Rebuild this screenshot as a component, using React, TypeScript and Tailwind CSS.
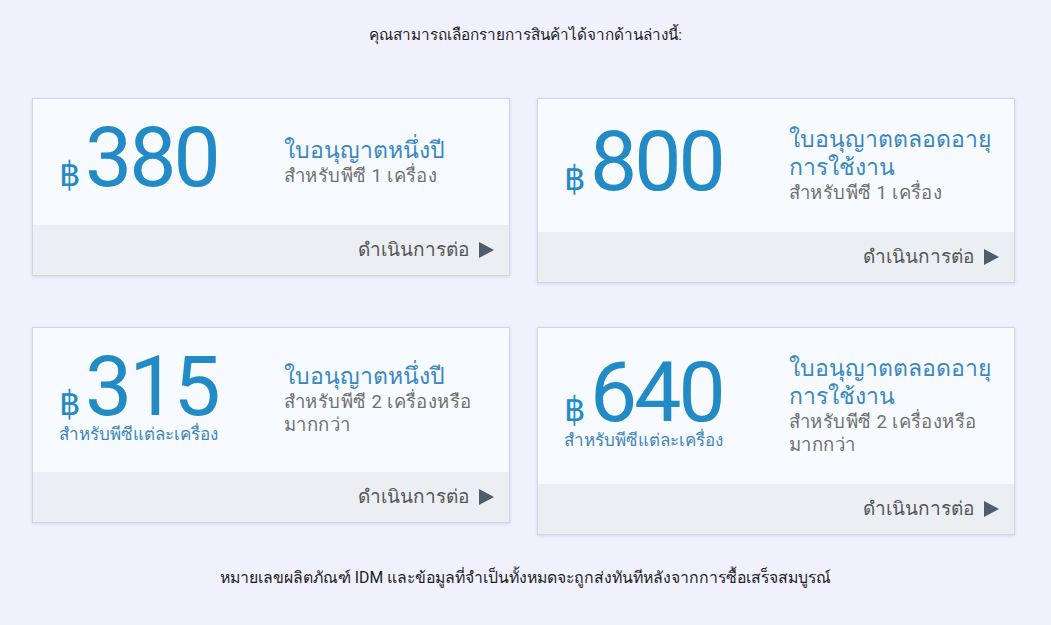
const CARDS = [
  {
    price: "380",
    title: ["ใบอนุญาตหนึ่งปี"],
    sub: ["สำหรับพีซี 1 เครื่อง"],
  },
  {
    price: "800",
    title: ["ใบอนุญาตตลอดอายุ", "การใช้งาน"],
    sub: ["สำหรับพีซี 1 เครื่อง"],
  },
  {
    price: "315",
    each: "สำหรับพีซีแต่ละเครื่อง",
    title: ["ใบอนุญาตหนึ่งปี"],
    sub: ["สำหรับพีซี 2 เครื่องหรือ", "มากกว่า"],
  },
  {
    price: "640",
    each: "สำหรับพีซีแต่ละเครื่อง",
    title: ["ใบอนุญาตตลอดอายุ", "การใช้งาน"],
    sub: ["สำหรับพีซี 2 เครื่องหรือ", "มากกว่า"],
  },
];

type Card = (typeof CARDS)[number];

function PriceCard({ c }: { c: Card }) {
  return (
    <div className="bg-[#f7fbff] border border-[#d3d6de] shadow-[0_1px_3px_rgba(40,40,80,0.12)]">
      <div className="flex items-center pl-[26px] pr-[16px] pt-[24px] pb-[24px]">
        <div className="w-[225px] shrink-0">
          <div
            className={
              c.each
                ? "flex items-baseline text-[#228ac4]"
                : "flex items-baseline text-[#228ac4] mb-[8px]"
            }
          >
            <span className="text-[34px] leading-none mr-[4px]">฿</span>
            <span className="text-[84px] leading-[70px] tracking-[-3px] font-['Roboto']">
              {c.price}
            </span>
          </div>
          {c.each && (
            <div className="text-[17px] leading-[20px] mt-[2px] mb-[4px] text-[#3d86bb]">
              {c.each}
            </div>
          )}
        </div>
        <div className="flex-1 py-[3px] whitespace-nowrap">
          {c.title.map((t) => (
            <div key={t} className="text-[23px] leading-[28px] text-[#3a88bf]">
              {t}
            </div>
          ))}
          {c.sub.map((t) => (
            <div
              key={t}
              className="text-[18.5px] leading-[23px] tracking-[0.4px] text-[#707070]"
            >
              {t}
            </div>
          ))}
        </div>
      </div>
      <div className="h-[50px] bg-[#ebeff3] flex items-center justify-end pr-[15px] gap-[10px]">
        <span className="text-[19px] text-[#555555]">ดำเนินการต่อ</span>
        <svg width="15" height="16" viewBox="0 0 15 16">
          <polygon points="0,0 15,8 0,16" fill="#4e5c6b" />
        </svg>
      </div>
    </div>
  );
}

export default function App() {
  return (
    <div className="min-h-[625px] bg-[#f0f1fd] font-['Roboto','Noto_Sans',sans-serif] pt-[25px]">
      <p className="text-center text-[15.3px] leading-[20px] text-[#1e1e1e]">
        คุณสามารถเลือกรายการสินค้าได้จากด้านล่างนี้:
      </p>
      <div className="grid grid-cols-[478px_478px] gap-x-[27px] gap-y-[44px] items-start pl-[32px] mt-[53px]">
        {CARDS.map((c) => (
          <PriceCard key={c.price} c={c} />
        ))}
      </div>
      <p className="text-center text-[15.8px] leading-[20px] text-[#1e1e1e] mt-[33px]">
        หมายเลขผลิตภัณฑ์ IDM และข้อมูลที่จำเป็นทั้งหมดจะถูกส่งทันทีหลังจากการซื้อเสร็จสมบูรณ์
      </p>
    </div>
  );
}
